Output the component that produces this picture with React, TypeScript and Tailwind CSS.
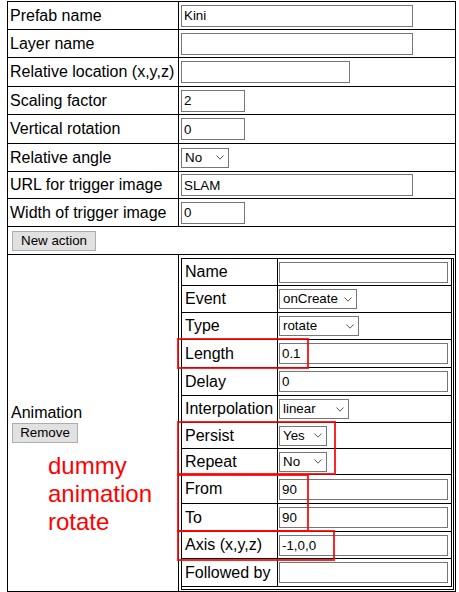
import React from "react";

function Chevron() {
  return (
    <svg width="8" height="5" viewBox="0 0 8 5" className="shrink-0">
      <polyline points="0.5,0.5 4,4.2 7.5,0.5" fill="none" stroke="#5a5a5a" strokeWidth="1" />
    </svg>
  );
}

function Select({ value, w }: { value: string; w: string }) {
  return (
    <div
      className={`${w} h-[20px] flex items-center justify-between border border-[#767676] bg-white pl-[3px] pr-[4px] text-[13.333px] text-black`}
    >
      <span className="leading-none">{value}</span>
      <Chevron />
    </div>
  );
}

function Input({ value, w, h }: { value: string; w: string; h: string }) {
  return (
    <input
      readOnly
      value={value}
      className={`${w} ${h} border border-[#767676] bg-white px-[2px] text-[13.333px] text-black outline-none rounded-none`}
    />
  );
}

type OuterRow = { label: string; h: string; ctrl: React.ReactNode };

const outerRows: OuterRow[] = [
  { label: "Prefab name", h: "h-[28px]", ctrl: <Input value="Kini" w="w-[232px]" h="h-[22px]" /> },
  { label: "Layer name", h: "h-[28px]", ctrl: <Input value="" w="w-[232px]" h="h-[22px]" /> },
  { label: "Relative location (x,y,z)", h: "h-[29px]", ctrl: <Input value="" w="w-[169px]" h="h-[22px]" /> },
  { label: "Scaling factor", h: "h-[28px]", ctrl: <Input value="2" w="w-[64px]" h="h-[22px]" /> },
  { label: "Vertical rotation", h: "h-[29px]", ctrl: <Input value="0" w="w-[64px]" h="h-[22px]" /> },
  { label: "Relative angle", h: "h-[28px]", ctrl: <Select value="No" w="w-[48px]" /> },
  { label: "URL for trigger image", h: "h-[27px]", ctrl: <Input value="SLAM" w="w-[232px]" h="h-[22px]" /> },
  { label: "Width of trigger image", h: "h-[28px]", ctrl: <Input value="0" w="w-[64px]" h="h-[22px]" /> },
];

const inp = (v: string) => <Input value={v} w="w-[169px]" h="h-[21px]" />;

const innerRows: OuterRow[] = [
  { label: "Name", h: "h-[27px]", ctrl: inp("") },
  { label: "Event", h: "h-[27px]", ctrl: <Select value="onCreate" w="w-[78px]" /> },
  { label: "Type", h: "h-[27px]", ctrl: <Select value="rotate" w="w-[80px]" /> },
  { label: "Length", h: "h-[28px]", ctrl: inp("0.1") },
  { label: "Delay", h: "h-[28px]", ctrl: inp("0") },
  { label: "Interpolation", h: "h-[27px]", ctrl: <Select value="linear" w="w-[70px]" /> },
  { label: "Persist", h: "h-[26px]", ctrl: <Select value="Yes" w="w-[48px]" /> },
  { label: "Repeat", h: "h-[26px]", ctrl: <Select value="No" w="w-[48px]" /> },
  { label: "From", h: "h-[29px]", ctrl: inp("90") },
  { label: "To", h: "h-[28px]", ctrl: inp("90") },
  { label: "Axis (x,y,z)", h: "h-[27px]", ctrl: inp("-1,0,0") },
  { label: "Followed by", h: "h-[28px]", ctrl: inp("") },
];

export default function App() {
  return (
    <div className="relative w-[459px] h-[592px] overflow-hidden bg-white text-black font-['Liberation_Sans',Arial,sans-serif] text-[16px]">
      <div className="ml-[7px] mt-[1px] w-[449px] border-x border-t border-black">
        {outerRows.map((r) => (
          <div key={r.label} className={`flex border-b border-black ${r.h}`}>
            <div className="w-[171px] shrink-0 border-r border-black flex items-center pl-[2px] leading-[18px] whitespace-nowrap">
              {r.label}
            </div>
            <div className="flex-1 flex items-center pl-[2px]">{r.ctrl}</div>
          </div>
        ))}
        <div className="flex items-center border-b border-black h-[28px]">
          <button className="ml-[4px] w-[84px] h-[20px] bg-[#e1e1e1] border border-[#adadad] text-[13.333px] leading-none text-black">
            New action
          </button>
        </div>
        <div className="flex border-b border-black h-[337px]">
          <div className="w-[171px] shrink-0 border-r border-black flex flex-col justify-center items-start">
            <div className="ml-[3px] leading-[18px]">Animation</div>
            <button className="ml-[4px] mt-[1px] w-[66px] h-[20px] bg-[#e1e1e1] border border-[#adadad] text-[13.333px] leading-none text-black">
              Remove
            </button>
          </div>
          <div className="flex-1 pt-[3px] pl-[2px]">
            <div className="w-[273px] border border-black pr-[1px] pb-[2px]">
              {innerRows.map((r) => (
                <div key={r.label} className={`flex border-b border-black ${r.h}`}>
                  <div className="w-[96px] shrink-0 border-r border-black flex items-center pl-[3px] leading-[18px] whitespace-nowrap">
                    {r.label}
                  </div>
                  <div className="w-[174px] shrink-0 border-r border-black flex items-center pl-[1px]">
                    {r.ctrl}
                  </div>
                </div>
              ))}
            </div>
          </div>
        </div>
      </div>

      {/* red annotation overlay */}
      <div className="absolute left-[48px] top-[452px] text-[24px] leading-[28px] text-[#ff0000]">
        dummy
        <br />
        animation
        <br />
        rotate
      </div>
      <div className="absolute left-[177px] top-[338px] w-[132px] h-[31px] border-2 border-[rgba(255,0,0,0.85)]" />
      <div className="absolute left-[177px] top-[421px] w-[159px] h-[54px] border-2 border-[rgba(255,0,0,0.85)]" />
      <div className="absolute left-[177px] top-[474px] w-[132px] h-[58px] border-2 border-[rgba(255,0,0,0.85)]" />
      <div className="absolute left-[177px] top-[530px] w-[158px] h-[31px] border-2 border-[rgba(255,0,0,0.85)]" />
    </div>
  );
}
